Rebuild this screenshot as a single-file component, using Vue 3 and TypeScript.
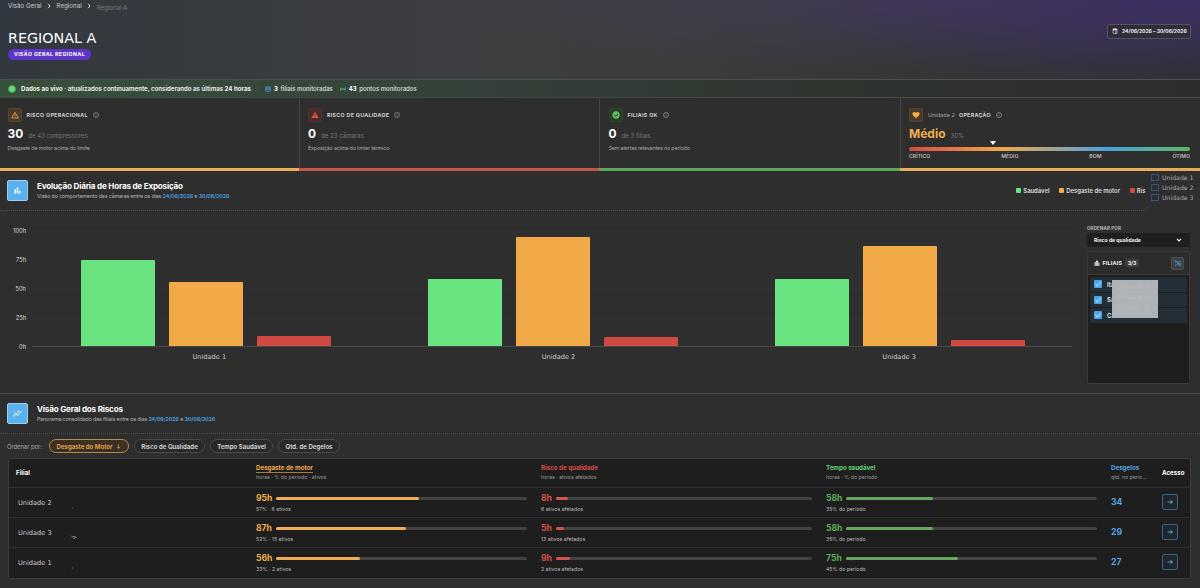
<script setup lang="ts">
interface Kpi {
  key: string
  title: string
  value: string
  suffix: string
  note: string
}

interface Metric {
  tone: string
  value: string
  pct: number
  note: string
}

interface Row {
  name: string
  mark: string
  metrics: Metric[]
  defrosts: number
}

const kpis: Kpi[] = [
  { key: 'wear', title: 'RISCO OPERACIONAL', value: '30', suffix: 'de 43 compressores', note: 'Desgaste de motor acima do limite' },
  { key: 'quality', title: 'RISCO DE QUALIDADE', value: '0', suffix: 'de 23 câmaras', note: 'Exposição acima do limiar térmico' },
  { key: 'ok', title: 'FILIAIS OK', value: '0', suffix: 'de 3 filiais', note: 'Sem alertas relevantes no período' },
]

const ticks = ['100h', '75h', '50h', '25h', '0h']

const groups = [
  { name: 'Unidade 1', bars: [75, 56, 9], shift: 4 },
  { name: 'Unidade 2', bars: [58, 95, 8], shift: 6.5 },
  { name: 'Unidade 3', bars: [58, 87, 5], shift: 0.5 },
]
const barTones = ['green', 'orange', 'red']

const units = ['Unidade 1', 'Unidade 2', 'Unidade 3']
const branches = ['Ita', 'Sa', 'Ca']
const coveredUnits = ['Unidade 3', 'Unidade 2', 'Unidade 1']
const sorts = ['Risco de Qualidade', 'Tempo Saudável', 'Qtd. de Degelos']

const rows: Row[] = [
  {
    name: 'Unidade 2',
    mark: 'M2 5h1',
    metrics: [
      { tone: 'orange', value: '95h', pct: 56.8, note: '57% · 6 ativos' },
      { tone: 'red', value: '8h', pct: 4.8, note: '6 ativos afetados' },
      { tone: 'green', value: '58h', pct: 34.6, note: '35% do período' },
    ],
    defrosts: 34,
  },
  {
    name: 'Unidade 3',
    mark: 'M1 2.500l1.500 2L4 3l1 2M2 3.500h4M4 4.500h3M3 5.500h2',
    metrics: [
      { tone: 'orange', value: '87h', pct: 52, note: '52% · 15 ativos' },
      { tone: 'red', value: '5h', pct: 3, note: '13 ativos afetados' },
      { tone: 'green', value: '58h', pct: 34.6, note: '35% do período' },
    ],
    defrosts: 29,
  },
  {
    name: 'Unidade 1',
    mark: 'M1.500 5h1.500',
    metrics: [
      { tone: 'orange', value: '56h', pct: 33.4, note: '33% · 2 ativos' },
      { tone: 'red', value: '9h', pct: 5.4, note: '2 ativos afetados' },
      { tone: 'green', value: '75h', pct: 44.7, note: '45% do período' },
    ],
    defrosts: 27,
  },
]
</script>

<template>
  <div class="page">
    <header class="hero">
      <div>
        <nav class="crumbs">
          <span>Visão Geral</span>
          <svg viewBox="0 0 4 6"><path d="M1 .8 3 3 1 5.2" /></svg>
          <span>Regional</span>
          <svg viewBox="0 0 4 6"><path d="M1 .8 3 3 1 5.2" /></svg>
          <span class="current">Regional A</span>
        </nav>
        <h1>REGIONAL A</h1>
        <span class="badge">VISÃO GERAL REGIONAL</span>
      </div>
      <div class="range">
        <svg viewBox="0 0 24 24"><path fill="#fff" fill-rule="evenodd" d="M5 3h2V1h2v2h6V1h2v2h2a2 2 0 0 1 2 2v15a2 2 0 0 1-2 2H5a2 2 0 0 1-2-2V5a2 2 0 0 1 2-2Zm0 6v11h14V9Zm7 5h5v4h-5Z" /></svg>
        <span>24/06/2026 – 30/06/2026</span>
      </div>
    </header>

    <div class="live">
      <i class="pulse"></i>
      <span class="live-text"><b>Dados ao vivo</b> · atualizados continuamente, considerando as últimas <b>24 horas</b></span>
      <i class="sep"></i>
      <svg class="store" viewBox="0 0 24 24"><path fill="none" stroke="#4b9be0" stroke-width="3" d="M3 3h18v18H3zM3 8h18M3 13h18" /></svg>
      <span class="count"><b>3</b> filiais monitoradas</span>
      <svg class="signal" viewBox="0 0 24 24"><path fill="none" stroke="#57b86b" stroke-width="3" d="M3 5q-3 7 0 14M8 8q-2 4 0 8M16 8q2 4 0 8M21 5q3 7 0 14M8 12h8" /></svg>
      <span class="count"><b>43</b> pontos monitorados</span>
    </div>

    <section class="kpis">
      <article v-for="k in kpis" :key="k.key" class="kpi" :class="k.key">
        <div class="kpi-head">
          <span class="kpi-icon">
            <svg v-if="k.key === 'wear'" viewBox="0 0 24 24"><path fill="none" stroke="#f0ab4c" stroke-width="2.4" d="M12 4 22 21H2ZM12 10v5M12 17v2" /></svg>
            <svg v-else-if="k.key === 'quality'" viewBox="0 0 24 24"><path fill="#e5504a" d="M12 2 23 21H1Z" /><path stroke="#4a2726" stroke-width="2" d="M12 9v5M12 16v2" /></svg>
            <svg v-else viewBox="0 0 24 24"><circle cx="12" cy="12" r="11" fill="#62b85f" /><path fill="none" stroke="#243c25" stroke-width="2.6" d="m7 12 4 4 7-7" /></svg>
          </span>
          <span class="kpi-title">{{ k.title }}</span>
          <svg class="info" viewBox="0 0 12 12"><circle cx="6" cy="6" r="5" /><path d="M6 5.2v3.2M6 3.2v1.1" /></svg>
        </div>
        <div class="kpi-value"><b>{{ k.value }}</b><span>{{ k.suffix }}</span></div>
        <div class="kpi-note">{{ k.note }}</div>
      </article>
      <article class="kpi health">
        <div class="kpi-head">
          <span class="kpi-icon">
            <svg viewBox="0 0 24 24"><path fill="#f4ad48" d="M12 22 3.5 13.5C-1 8.5 2 3 6.800 3 9 3 11 4.200 12 6c1-1.800 3-3 5.200-3C22 3 25 8.500 20.500 13.500Z" /></svg>
          </span>
          <span class="unit">Unidade 2</span>
          <span class="kpi-title">OPERAÇÃO</span>
          <svg class="info" viewBox="0 0 12 12"><circle cx="6" cy="6" r="5" /><path d="M6 5.2v3.2M6 3.2v1.1" /></svg>
        </div>
        <div class="level"><b>Médio</b><span>30%</span></div>
        <div class="scale"><i class="pointer" :style="{ left: '30%' }"></i></div>
        <div class="scale-labels"><span>CRÍTICO</span><span>MÉDIO</span><span>BOM</span><span>ÓTIMO</span></div>
      </article>
    </section>

    <section class="evolution">
      <div class="section-head">
        <span class="tile"><svg viewBox="0 0 24 24"><path fill="#fff" d="M4 9h4v11H4zM10 4h4v16h-4zM16 13h4v7h-4z" /></svg></span>
        <div class="titles">
          <h2>Evolução Diária de Horas de Exposição</h2>
          <p>Visão do comportamento das câmaras entre os dias <b>24/06/2026</b> e <b>30/06/2026</b></p>
        </div>
        <div class="legend">
          <span><i class="green"></i>Saudável</span>
          <span><i class="orange"></i>Desgaste de motor</span>
          <span><i class="red"></i>Ris</span>
        </div>
        <div class="unit-list">
          <label v-for="u in units" :key="u"><i></i>{{ u }}</label>
        </div>
      </div>

      <div class="chart-area">
        <div class="axis"><span v-for="t in ticks" :key="t">{{ t }}</span></div>
        <div class="plot-wrap">
          <div class="plot">
            <div v-for="g in groups" :key="g.name" class="group">
              <i v-for="(v, i) in g.bars" :key="i" :class="barTones[i]" :style="{ height: v + '%' }"></i>
            </div>
          </div>
          <div class="names"><span v-for="g in groups" :key="g.name" :style="{ paddingLeft: g.shift * 2 + 'px' }">{{ g.name }}</span></div>
        </div>
        <aside class="side">
          <div class="side-label">ORDENAR POR</div>
          <div class="select">
            <span>Risco de qualidade</span>
            <svg viewBox="0 0 10 6"><path d="m1.500 1 3.500 3.500L8.500 1" /></svg>
          </div>
          <div class="panel">
            <div class="panel-head">
              <svg class="city" viewBox="0 0 24 24"><path fill="#ddd" d="M2 9h5V5l5-4 5 4v6h5v12H2Zm3 3v2h2v-2Zm0 5v2h2v-2Zm6-9v2h2V8Zm0 5v2h2v-2Zm0 5v2h2v-2Zm6-4v2h2v-2Zm0 4v2h2v-2Z" fill-rule="evenodd" /></svg>
              <b>FILIAIS</b><em>3/3</em>
              <span class="clear"><svg viewBox="0 0 24 24"><path fill="none" stroke="#4b9be0" stroke-width="2.400" d="m2 7 4 4 4-4M11 8h11M9 13h13M2 17l4 3 5-5M13 18h9M3 3l18 18" /></svg></span>
            </div>
            <div class="panel-body">
              <div v-for="b in branches" :key="b" class="branch">
                <i><svg viewBox="0 0 10 10"><path d="m2 5.200 2.200 2.200L8.200 3" /></svg></i>{{ b }}
              </div>
              <div class="cover"><span v-for="u in coveredUnits" :key="u">{{ u }}</span></div>
            </div>
          </div>
        </aside>
      </div>
    </section>

    <section class="risks">
      <div class="section-head">
        <span class="tile"><svg viewBox="0 0 24 24"><path fill="none" stroke="#fff" stroke-width="2" d="m2 18 6-6 5 4 8-9" /><g fill="#fff"><circle cx="2.500" cy="18" r="2" /><circle cx="8" cy="12" r="2" /><circle cx="13" cy="16" r="2" /><circle cx="21" cy="7" r="2" /><path d="m14 3 1 2.500L17.500 6.500 15 7.500 14 10l-1-2.500L10.500 6.500 13 5.500ZM4 6l.7 1.500L6 8l-1.300.6L4 10l-.7-1.400L2 8l1.300-.5Z" /></g></svg></span>
        <div class="titles">
          <h2>Visão Geral dos Riscos</h2>
          <p>Panorama consolidado das filiais entre os dias <b>24/06/2026</b> e <b>30/06/2026</b></p>
        </div>
      </div>
      <div class="sorts">
        <span class="sort-label">Ordenar por:</span>
        <button class="active">Desgaste do Motor<svg viewBox="0 0 10 10"><path d="M5 .8v8M1.800 5.600 5 8.800l3.200-3.200" /></svg></button>
        <button v-for="s in sorts" :key="s">{{ s }}</button>
      </div>

      <div class="table">
        <div class="tr th">
          <div class="name-h">Filial</div>
          <div><b class="t-orange underlined">Desgaste de motor</b><small>horas · % do período · ativos</small></div>
          <div><b class="t-red">Risco de qualidade</b><small>horas · ativos afetados</small></div>
          <div><b class="t-bright">Tempo saudável</b><small>horas · % do período</small></div>
          <div><b class="t-blue">Desgelos</b><small>qtd. no perío...</small></div>
          <div class="access-h">Acesso</div>
        </div>
        <div v-for="r in rows" :key="r.name" class="tr">
          <div class="name">{{ r.name }}<svg viewBox="0 0 8 8"><path :d="r.mark" /></svg></div>
          <div v-for="m in r.metrics" :key="m.tone" class="metric">
            <div class="metric-line">
              <b :class="'t-' + m.tone">{{ m.value }}</b>
              <div class="track"><i :class="'f-' + m.tone" :style="{ width: m.pct + '%' }"></i></div>
            </div>
            <small>{{ m.note }}</small>
          </div>
          <div class="defrosts">{{ r.defrosts }}</div>
          <div class="access"><span class="go"><svg viewBox="0 0 10 10"><path d="M1 5h8M5.800 2 9 5 5.800 8" /></svg></span></div>
        </div>
      </div>
    </section>
  </div>
</template>

<style>
html, body { background: #2e2e2e; overflow: hidden; }
</style>

<style scoped>
* { box-sizing: border-box; }
.page { width: 1200px; height: 588px; overflow: hidden; background: #2e2e2e; color: #eee; font-family: Inter, "Liberation Sans", sans-serif; display: flex; flex-direction: column; }
svg { display: block; flex: none; }
h1, h2, p { margin: 0; }
i, em { font-style: normal; }
b { font-weight: 700; }
.hero { height: 80px; flex: none; display: flex; justify-content: space-between; padding: 0 9px 0 8px; border-bottom: 1px solid #4d4e4f;
  background: radial-gradient(ellipse 420px 95px at 100% 0, rgba(62, 44, 112, .75), transparent), radial-gradient(ellipse 520px 70px at 78% 0, rgba(72, 60, 100, .6), transparent), linear-gradient(90deg, #32383f, #3d3e41 38%, #3d3d3e 55%, #353535 80%, #303030); }
.crumbs { display: flex; align-items: center; height: 11px; font-size: 6.200px; color: #c9cbce; }
.crumbs svg { width: 4px; height: 6px; margin: 0 6px 0 5px; fill: none; stroke: #ddd; stroke-width: 1; }
.crumbs .current { font-size: 6.100px; color: #77797c; padding-top: 3px; }
h1 { font: 400 14.300px/18px "DejaVu Sans", sans-serif; color: #fff; margin-top: 18px; }
.badge { display: block; width: 83px; height: 11px; margin-top: 2px; border-radius: 6px; background: #5c35c6; color: #fff; font-size: 5.200px; line-height: 11px; font-weight: 700; letter-spacing: .42px; text-align: center; white-space: nowrap; }
.range { display: flex; align-items: center; width: 84px; height: 15px; margin-top: 23.500px; padding-left: 4px; gap: 4px; border: 1px solid #56515f; border-radius: 2px; background: #312d3a; font-size: 5px; font-weight: 700; white-space: nowrap; }
.range svg { width: 6px; height: 6px; }
.live { height: 18px; flex: none; display: flex; align-items: center; padding-left: 8px; font-size: 6.120px; border-bottom: 1px solid #434b45; white-space: nowrap; background: linear-gradient(90deg, #39503c, #344039 40%, #2f342f 70%, #2d2d2d); }
.pulse { width: 8px; height: 8px; border-radius: 50%; background: #68dc7e; border: 1px solid #4a9a57; margin-right: 5px; }
.live-text { font-weight: 600; color: #f2f2f2; width: 236px; }
.sep { width: 1px; height: 6px; background: #405947; margin-right: 7px; }
.store { width: 6px; height: 6px; margin-right: 3px; }
.signal { width: 6px; height: 6px; margin: 0 3px 0 7px; }
.count { color: #dfe2df; font-weight: 500; font-size: 6px; }
.count b { color: #fff; margin-right: 1px; }
.kpis { height: 73px; flex: none; display: grid; grid-template-columns: 298.500px 300.500px 300.500px 300.500px; }
.kpi { border-bottom: 3px solid; padding: 9px 0 0 9.500px; min-width: 0; position: relative; }
.kpi + .kpi::before { content: ""; position: absolute; left: 0; top: 0; bottom: 0; width: 1px; background: #434343; }
.wear { border-color: #e9ac59; padding-left: 7.500px; }
.quality { border-color: #c05650; }
.ok { border-color: #5ca75a; }
.health { border-color: #e9ac59; }
.kpi-head { display: flex; align-items: center; height: 15px; }
.kpi-icon { width: 14px; height: 14px; border-radius: 2px; display: grid; place-items: center; margin-right: 5px; background: #4a3b29; border: 1px solid #56452e; }
.kpi-icon svg { width: 8px; height: 8px; }
.quality .kpi-icon { background: #482c2b; border-color: #4f302e; }
.ok .kpi-icon { background: #263c26; border-color: #29482a; }
.kpi-title { font-size: 5.250px; font-weight: 700; letter-spacing: .33px; color: #cfcfcf; }
.info { width: 6px; height: 6px; margin-left: 5px; fill: none; stroke: #aaa; stroke-width: 1.200; }
.unit { font: 400 5.300px "DejaVu Sans", sans-serif; color: #aaa; margin-right: 4px; }
.kpi-value { display: flex; align-items: baseline; gap: 5px; margin-top: 5px; height: 14px; line-height: 14px; }
.kpi-value b { font-size: 11.900px; color: #fff; }
.kpi-value span { font-size: 6.100px; color: #777; }
.kpi-note { font-size: 5.300px; letter-spacing: -.13px; line-height: 8px; margin-top: 2.500px; color: #a8a8a8; }
.level { display: flex; align-items: baseline; gap: 5px; margin-top: 4.500px; height: 14px; line-height: 14px; color: #f0ab4c; }
.level b { font-size: 12px; }
.level span { font-size: 6.100px; color: #777; }
.scale { position: relative; margin-top: 6.500px; width: 281px; height: 4px; border-radius: 2px; background: linear-gradient(90deg, #d44c45, #f0a848 33%, #4c9fe3 70%, #5ab85d); }
.pointer { position: absolute; top: -6px; margin-left: -3px; border: 3px solid transparent; border-top: 4px solid #fff; border-bottom: 0; }
.scale-labels { display: flex; justify-content: space-between; width: 281px; font-size: 5.200px; font-weight: 600; line-height: 8px; margin-top: 1px; color: #bbb; }

.section-head { position: relative; display: flex; align-items: center; height: 40px; padding-left: 7px; border-bottom: 1px dotted #515151; }
.tile { width: 21px; height: 21px; border-radius: 2px; background: #59b1ee; border: 1px solid #a2cdea; display: grid; place-items: center; margin-right: 9px; }
.tile svg { width: 9px; height: 9px; }
h2 { font-size: 8.100px; letter-spacing: -.195px; line-height: 11px; font-weight: 700; color: #fff; white-space: nowrap; }
.titles p { font-size: 5.300px; letter-spacing: -.125px; line-height: 8px; color: #b5b5b5; white-space: nowrap; }
.titles p b { color: #4598d8; }
.legend { display: flex; margin-left: auto; width: 130px; margin-right: 54px; font-size: 5.900px; font-weight: 600; color: #ddd; gap: 9.500px; white-space: nowrap; }
.legend span { display: flex; align-items: center; gap: 2.300px; }
.legend i { width: 5px; height: 5px; border-radius: 1px; flex: none; }
.unit-list { position: absolute; left: 1147px; top: 0; width: 53px; height: 41px; background: #2e2e2e; padding: 1px 0 0 4px; font: 400 6.200px "DejaVu Sans", sans-serif; color: #a9a9a9; }
.unit-list label { display: flex; align-items: center; height: 10.400px; gap: 3px; white-space: nowrap; }
.unit-list i { width: 8px; height: 7px; border: 1px solid #35557b; }
.green { background: #69e481; }
.orange { background: #f2aa49; }
.red { background: #d14a41; }

.evolution { height: 223px; flex: none; border-bottom: 1px solid #484848; }
.chart-area { display: flex; height: 182px; }
.axis { width: 32px; padding: 15px 6px 0 0; display: flex; flex-direction: column; text-align: right; font-size: 5.700px; color: #ddd; }
.axis span { height: 29px; line-height: 10px; }
.plot-wrap { width: 1040px; padding-top: 20px; }
.plot { height: 116px; display: grid; grid-template-columns: repeat(3, 1fr); border-bottom: 1px solid #4a4a4a; background: repeating-linear-gradient(180deg, #323232 0 1px, transparent 1px 29px); }
.group { display: flex; justify-content: center; align-items: flex-end; gap: 14px; padding-left: 1.700px; }
.group i { width: 74px; border-radius: 1px 1px 0 0; }
.names { display: grid; grid-template-columns: repeat(3, 1fr); text-align: center; font: 400 6.600px/10px "DejaVu Sans", sans-serif; color: #ccc; margin-top: 5px; }
.side { margin-left: 15px; width: 103px; padding-top: 14px; }
.side-label { font-size: 4.400px; line-height: 7px; font-weight: 700; letter-spacing: .2px; color: #bbb; }
.select { height: 14px; margin-top: 1px; border-radius: 2px; background: #1f1f1f; display: flex; align-items: center; justify-content: space-between; padding: 0 8px 0 7px; font-size: 5.100px; font-weight: 700; color: #eee; }
.select svg { width: 6px; height: 4px; fill: none; stroke: #fff; stroke-width: 1.800; }
.panel { margin-top: 4px; height: 133px; border: 1px solid #3a3a3a; border-radius: 2px; background: #1e1e1e; overflow: hidden; }
.panel-head { height: 23px; display: flex; align-items: center; padding: 0 5px 0 5.500px; background: #2c2c2c; border-bottom: 1px solid #3a3a3a; font-size: 5.400px; }
.city { width: 6px; height: 6px; margin-right: 3px; }
.panel-head b { letter-spacing: .2px; }
.panel-head em { margin-left: 2.500px; padding: 0 3px; border-radius: 2px; background: #3f3f3f; font-weight: 700; line-height: 8px; font-size: 5.200px; }
.clear { width: 13px; height: 13px; margin-left: auto; border-radius: 2px; border: 1px solid #505050; background: #3c3f42; display: grid; place-items: center; }
.clear svg { width: 8px; height: 8px; }
.panel-body { position: relative; padding: 2px 2px; }
.branch { height: 14.500px; margin-bottom: 1px; padding-left: 4px; display: flex; align-items: center; gap: 5px; background: #242e37; border-radius: 2px; font-size: 6.100px; font-weight: 600; }
.branch i { width: 8px; height: 8px; border-radius: 1px; background: #4ba5ec; }
.branch svg { width: 8px; height: 8px; fill: none; stroke: #fff; stroke-width: 1.200; }
.cover { position: absolute; left: 24px; top: 5px; width: 46px; height: 38px; background: #afb3b7; color: #bcbbb9; font: 400 6.200px/10.400px "DejaVu Sans", sans-serif; padding: 2px 0 0 5px; display: flex; flex-direction: column; }

.risks .section-head { height: 40px; }
.sorts { display: flex; align-items: center; height: 24px; margin-bottom: -.500px; padding: 0 0 0 7px; gap: 5px; }
.sort-label { font-size: 5.800px; color: #aaa; width: 37px; white-space: nowrap; }
.sorts button { height: 14px; padding: 0; border: 1px solid #4a4a4a; border-radius: 7px; background: #292929; color: #ddd; font: 600 6.100px Inter, sans-serif; display: flex; align-items: center; justify-content: center; gap: 4px; white-space: nowrap; width: 71px; }
.sorts button:nth-of-type(3) { width: 63px; }
.sorts button:nth-of-type(4) { width: 62px; }
.sorts button.active { width: 80px; border-color: #b98a47; background: #3a3023; color: #f0ab4c; }
.sorts button svg { width: 5px; height: 5px; fill: none; stroke: #f0ab4c; stroke-width: 1.300; }
.table { margin: 0 9.500px 0 7.500px; border: 1px solid #3c3c3c; border-radius: 3px; background: #1e1e1e; overflow: hidden; }
.tr { display: grid; grid-template-columns: 247.500px 285px 285px 285px 51px 1fr; align-items: center; height: 30.200px; border-top: 1px solid #2f2f2f; }
.tr.th { height: 28.500px; border-top: 0; font-size: 6.200px; }
.th b, .th small { display: block; width: max-content; }
.th b { line-height: 8px; }
.th small { font-size: 5.200px; line-height: 8px; margin-top: 1px; color: #999; }
.th .underlined { border-bottom: 1px solid #a77a3c; line-height: 7.500px; margin-bottom: -.5px; }
.name-h, .access-h { font-weight: 700; color: #fff; }
.name-h { padding-left: 7.500px; }
.name { display: flex; align-items: center; gap: 18px; font: 400 6.600px "DejaVu Sans", sans-serif; color: #ccc; padding-left: 9.500px; }
.name svg { width: 8px; height: 8px; margin-top: 8px; fill: none; stroke: #777; stroke-width: .7; }
.metric-line { display: flex; align-items: center; gap: 4px; width: 271px; height: 11px; }
.metric-line b { font-size: 8.600px; }
.track { flex: 1; height: 3px; border-radius: 2px; background: #434343; }
.track i { display: block; height: 3px; border-radius: 2px; }
.metric small { display: block; font-size: 5.200px; line-height: 8px; margin-top: 1px; color: #bbb; }
.t-orange { color: #f0ab4c; }
.t-red { color: #d64e47; }
.t-green { color: #5caa58; }
.t-bright { color: #60d375; }
.t-blue, .defrosts { color: #55a5e4; }
.f-orange { background: #edae57; }
.f-red { background: #d3544c; }
.f-green { background: #67a75f; }
.defrosts { font-size: 8.600px; font-weight: 700; padding-bottom: 1px; }
.access { padding-bottom: 1.500px; }
.go { width: 16px; height: 16px; border: 1px solid #3f647b; border-radius: 2px; background: #1c2730; display: grid; place-items: center; }
.go svg { width: 6px; height: 6px; fill: none; stroke: #a8c8dc; stroke-width: 1.200; }
</style>
